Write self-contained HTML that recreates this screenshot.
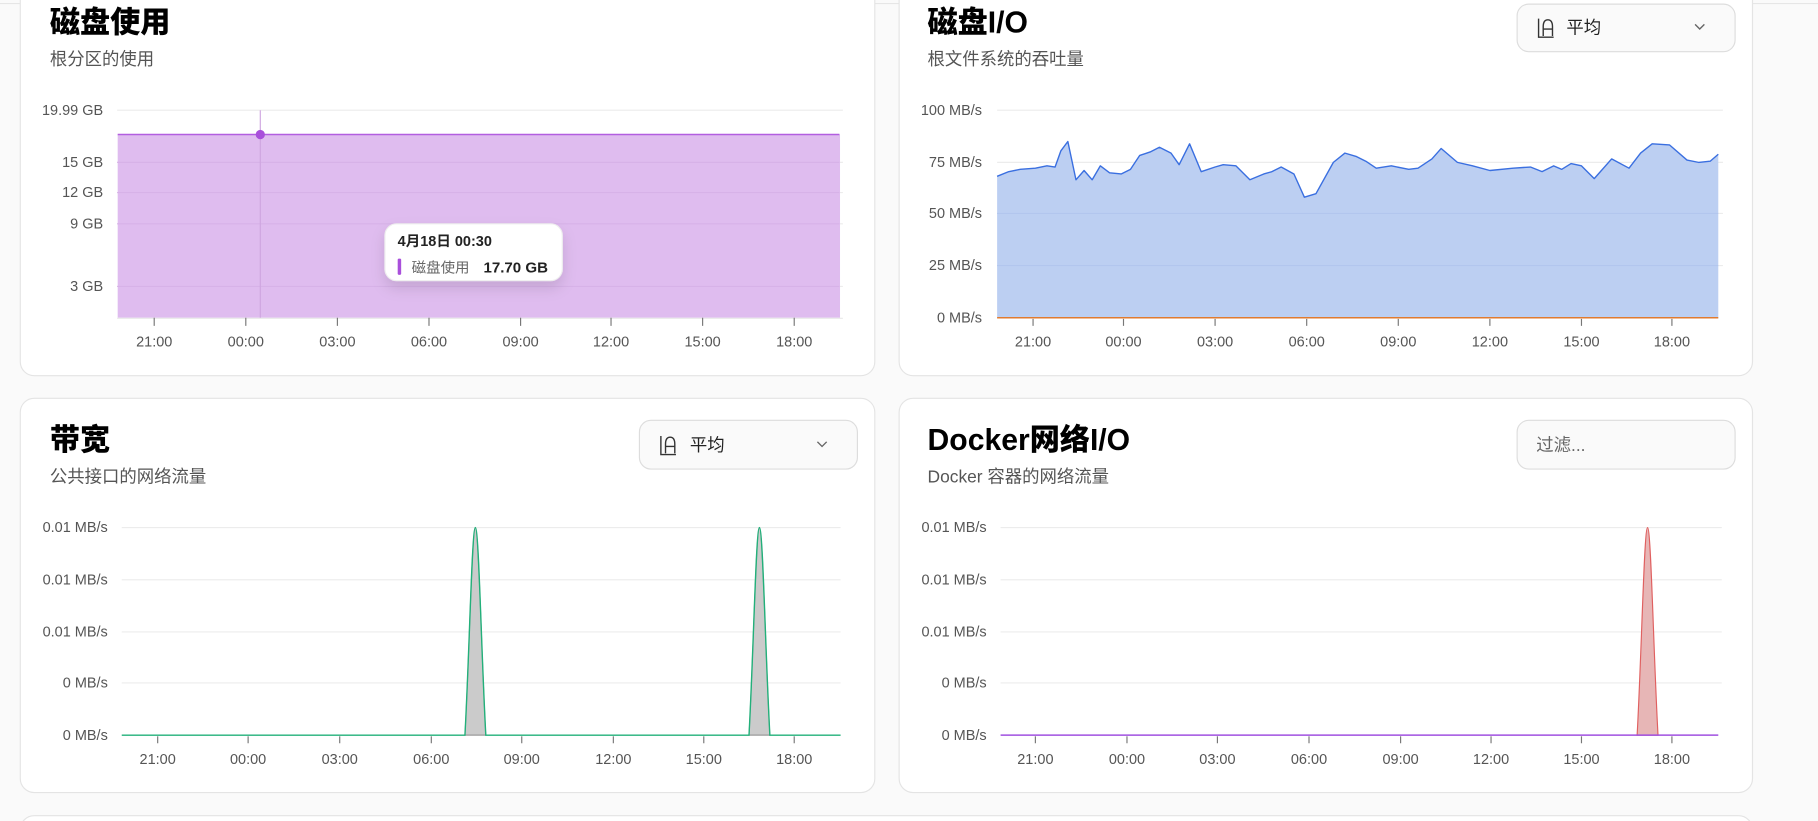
<!DOCTYPE html>
<html><head><meta charset="utf-8"><style>
html,body{margin:0;padding:0;background:#fafafa;width:1818px;height:821px;overflow:hidden}
svg{display:block}
text{font-family:"Liberation Sans","Noto Sans CJK SC",sans-serif}
.t{font-size:26px;font-weight:900;fill:#000}
.s{font-size:15px;fill:#555}
.y{font-size:12.5px;fill:#555;text-anchor:end}
.x{font-size:12.5px;fill:#555;text-anchor:middle}
.g{stroke:#ececec;stroke-width:1}
.tk{stroke:#777;stroke-width:1}
</style></head><body>
<svg width="1818" height="821" viewBox="0 0 1568 708" xmlns="http://www.w3.org/2000/svg">
<defs><filter id="sh" x="-30%" y="-30%" width="160%" height="180%"><feDropShadow dx="0" dy="6" stdDeviation="6" flood-color="#000" flood-opacity="0.12"/></filter></defs>
<rect width="1568" height="708" fill="#fafafa"/>
<line x1="0" y1="3" x2="1568" y2="3" stroke="#e6e6e6"/>
<rect x="17.5" y="-20" width="737" height="344" rx="12" fill="#fff" stroke="#e4e4e4"/>
<rect x="775.5" y="-20" width="736" height="344" rx="12" fill="#fff" stroke="#e4e4e4"/>
<rect x="17.5" y="343.5" width="737" height="340" rx="12" fill="#fff" stroke="#e4e4e4"/>
<rect x="775.5" y="343.5" width="736" height="340" rx="12" fill="#fff" stroke="#e4e4e4"/>
<rect x="17.5" y="703.5" width="1494" height="40" rx="12" fill="#fff" stroke="#e4e4e4"/>

<text x="43" y="28" class="t">磁盘使用</text>
<text x="43" y="56" class="s">根分区的使用</text>
<g class="g"><line x1="101" y1="95" x2="727" y2="95"/><line x1="101" y1="140" x2="727" y2="140"/><line x1="101" y1="166" x2="727" y2="166"/><line x1="101" y1="193" x2="727" y2="193"/><line x1="101" y1="247" x2="727" y2="247"/></g>
<rect x="101.5" y="116" width="623" height="158" fill="#dfbcef"/>
<g stroke="#d7b2e8"><line x1="101" y1="140" x2="724" y2="140"/><line x1="101" y1="166" x2="724" y2="166"/><line x1="101" y1="193" x2="724" y2="193"/><line x1="101" y1="247" x2="724" y2="247"/></g>
<line x1="101.5" y1="116" x2="724" y2="116" stroke="#b25ee0" stroke-width="1.3"/>
<line x1="101" y1="274.5" x2="727" y2="274.5" stroke="#e8e8e8"/>
<line x1="224.5" y1="95" x2="224.5" y2="274" stroke="#cfa6e0"/>
<circle cx="224.5" cy="116" r="4" fill="#a94fdb"/>
<text x="89" y="99" class="y">19.99 GB</text><text x="89" y="144" class="y">15 GB</text><text x="89" y="170" class="y">12 GB</text><text x="89" y="197" class="y">9 GB</text><text x="89" y="251" class="y">3 GB</text>
<g class="tk"><line x1="133" y1="274" x2="133" y2="281"/><line x1="212" y1="274" x2="212" y2="281"/><line x1="291" y1="274" x2="291" y2="281"/><line x1="370" y1="274" x2="370" y2="281"/><line x1="449" y1="274" x2="449" y2="281"/><line x1="527" y1="274" x2="527" y2="281"/><line x1="606" y1="274" x2="606" y2="281"/><line x1="685" y1="274" x2="685" y2="281"/></g>
<text x="133" y="299" class="x">21:00</text><text x="212" y="299" class="x">00:00</text><text x="291" y="299" class="x">03:00</text><text x="370" y="299" class="x">06:00</text><text x="449" y="299" class="x">09:00</text><text x="527" y="299" class="x">12:00</text><text x="606" y="299" class="x">15:00</text><text x="685" y="299" class="x">18:00</text>
<rect x="332" y="193" width="153" height="49" rx="10" fill="#fff" stroke="#eee" filter="url(#sh)"/>
<text x="343" y="212" style="font-size:12.5px;font-weight:700;fill:#222">4月18日 00:30</text>
<rect x="343" y="223" width="3" height="14" rx="1" fill="#a94fdb"/>
<text x="355" y="235" style="font-size:12.5px;fill:#666">磁盘使用</text>
<text x="417" y="235" style="font-size:13px;font-weight:700;fill:#222">17.70 GB</text>

<text x="800" y="28" class="t">磁盘I/O</text>
<text x="800" y="56" class="s">根文件系统的吞吐量</text>
<rect x="1308.5" y="3.5" width="188" height="41" rx="10" fill="#fafafa" stroke="#ddd"/>
<path d="M1327 16v16h13M1331 31v-8q0-6 4-6q4 0 4 6v8M1331 25h8" fill="none" stroke="#333" stroke-width="1.2"/>
<text x="1351" y="29" style="font-size:15px;fill:#222">平均</text>
<path d="M1462 21l4 4 4-4" fill="none" stroke="#666" stroke-width="1.2"/>
<g class="g"><line x1="860" y1="95" x2="1486" y2="95"/><line x1="860" y1="140" x2="1486" y2="140"/><line x1="860" y1="184" x2="1486" y2="184"/><line x1="860" y1="229" x2="1486" y2="229"/></g>
<path d="M860,274 L860,152 L870,148 L880,146 L893,145 L903,143 L910,144 L915,130 L921,122 L928,155 L935,147 L942,155 L949,143 L957,149 L967,150 L975,146 L983,134 L992,131 L1000,127 L1010,132 L1017,142 L1026,124 L1036,148 L1048,144 L1055,142 L1066,143 L1078,155 L1090,150 L1097,148 L1105,144 L1116,150 L1125,170 L1135,167 L1150,140 L1160,132 L1170,135 L1178,139 L1187,145 L1200,143 L1215,146 L1223,145 L1235,137 L1243,128 L1257,140 L1270,143 L1285,147 L1305,145 L1320,144 L1330,148 L1340,143 L1347,146 L1355,141 L1364,143 L1375,154 L1390,137 L1405,145 L1415,132 L1425,124 L1440,125 L1455,138 L1465,140 L1475,139 L1482,133 L1482,274 Z" fill="#bccff2"/>
<g stroke="#b2c6ee"><line x1="860" y1="184" x2="1482" y2="184"/><line x1="860" y1="229" x2="1482" y2="229"/></g>
<path d="M860,152 L870,148 L880,146 L893,145 L903,143 L910,144 L915,130 L921,122 L928,155 L935,147 L942,155 L949,143 L957,149 L967,150 L975,146 L983,134 L992,131 L1000,127 L1010,132 L1017,142 L1026,124 L1036,148 L1048,144 L1055,142 L1066,143 L1078,155 L1090,150 L1097,148 L1105,144 L1116,150 L1125,170 L1135,167 L1150,140 L1160,132 L1170,135 L1178,139 L1187,145 L1200,143 L1215,146 L1223,145 L1235,137 L1243,128 L1257,140 L1270,143 L1285,147 L1305,145 L1320,144 L1330,148 L1340,143 L1347,146 L1355,141 L1364,143 L1375,154 L1390,137 L1405,145 L1415,132 L1425,124 L1440,125 L1455,138 L1465,140 L1475,139 L1482,133" fill="none" stroke="#3a6fe0" stroke-width="1.2" stroke-linejoin="round"/>
<line x1="860" y1="274" x2="1482" y2="274" stroke="#e07b30" stroke-width="1.3"/>
<text x="847" y="99" class="y">100 MB/s</text><text x="847" y="144" class="y">75 MB/s</text><text x="847" y="188" class="y">50 MB/s</text><text x="847" y="233" class="y">25 MB/s</text><text x="847" y="278" class="y">0 MB/s</text>
<g class="tk"><line x1="891" y1="275" x2="891" y2="281"/><line x1="969" y1="275" x2="969" y2="281"/><line x1="1048" y1="275" x2="1048" y2="281"/><line x1="1127" y1="275" x2="1127" y2="281"/><line x1="1206" y1="275" x2="1206" y2="281"/><line x1="1285" y1="275" x2="1285" y2="281"/><line x1="1364" y1="275" x2="1364" y2="281"/><line x1="1442" y1="275" x2="1442" y2="281"/></g>
<text x="891" y="299" class="x">21:00</text><text x="969" y="299" class="x">00:00</text><text x="1048" y="299" class="x">03:00</text><text x="1127" y="299" class="x">06:00</text><text x="1206" y="299" class="x">09:00</text><text x="1285" y="299" class="x">12:00</text><text x="1364" y="299" class="x">15:00</text><text x="1442" y="299" class="x">18:00</text>

<text x="43" y="388" class="t">带宽</text>
<text x="43" y="416" class="s">公共接口的网络流量</text>
<rect x="551.5" y="362.5" width="188" height="42" rx="10" fill="#fafafa" stroke="#ddd"/>
<path d="M570 376v16h13M574 391v-8q0-6 4-6q4 0 4 6v8M574 385h8" fill="none" stroke="#333" stroke-width="1.2"/>
<text x="595" y="389" style="font-size:15px;fill:#222">平均</text>
<path d="M705 381l4 4 4-4" fill="none" stroke="#666" stroke-width="1.2"/>
<g class="g"><line x1="105" y1="455" x2="725" y2="455"/><line x1="105" y1="500" x2="725" y2="500"/><line x1="105" y1="545" x2="725" y2="545"/><line x1="105" y1="589" x2="725" y2="589"/></g>
<path d="M401,634 C405,560 407,455 410,455 C413,455 415,560 419,634 Z M646,634 C650,560 652,455 655,455 C658,455 660,560 664,634 Z" fill="#cbcbcb" stroke="#888" stroke-width="0.8"/>
<path d="M105,634 L401,634 C405,560 407,455 410,455 C413,455 415,560 419,634 L646,634 C650,560 652,455 655,455 C658,455 660,560 664,634 L725,634" fill="none" stroke="#22b07a" stroke-width="1.2"/>
<text x="93" y="459" class="y">0.01 MB/s</text><text x="93" y="504" class="y">0.01 MB/s</text><text x="93" y="549" class="y">0.01 MB/s</text><text x="93" y="593" class="y">0 MB/s</text><text x="93" y="638" class="y">0 MB/s</text>
<g class="tk"><line x1="136" y1="635" x2="136" y2="641"/><line x1="214" y1="635" x2="214" y2="641"/><line x1="293" y1="635" x2="293" y2="641"/><line x1="372" y1="635" x2="372" y2="641"/><line x1="450" y1="635" x2="450" y2="641"/><line x1="529" y1="635" x2="529" y2="641"/><line x1="607" y1="635" x2="607" y2="641"/><line x1="685" y1="635" x2="685" y2="641"/></g>
<text x="136" y="659" class="x">21:00</text><text x="214" y="659" class="x">00:00</text><text x="293" y="659" class="x">03:00</text><text x="372" y="659" class="x">06:00</text><text x="450" y="659" class="x">09:00</text><text x="529" y="659" class="x">12:00</text><text x="607" y="659" class="x">15:00</text><text x="685" y="659" class="x">18:00</text>

<text x="800" y="388" class="t">Docker网络I/O</text>
<text x="800" y="416" class="s">Docker 容器的网络流量</text>
<rect x="1308.5" y="362.5" width="188" height="42" rx="10" fill="#fafafa" stroke="#ddd"/>
<text x="1325" y="389" style="font-size:15px;fill:#666">过滤...</text>
<g class="g"><line x1="863" y1="455" x2="1485" y2="455"/><line x1="863" y1="500" x2="1485" y2="500"/><line x1="863" y1="545" x2="1485" y2="545"/><line x1="863" y1="589" x2="1485" y2="589"/></g>
<path d="M1412,634 C1416,560 1418,455 1421,455 C1424,455 1426,560 1430,634 Z" fill="#e7b6b6" stroke="#e06060" stroke-width="1"/>
<line x1="863" y1="634" x2="1482" y2="634" stroke="#a050e0" stroke-width="1.3"/>
<text x="851" y="459" class="y">0.01 MB/s</text><text x="851" y="504" class="y">0.01 MB/s</text><text x="851" y="549" class="y">0.01 MB/s</text><text x="851" y="593" class="y">0 MB/s</text><text x="851" y="638" class="y">0 MB/s</text>
<g class="tk"><line x1="893" y1="635" x2="893" y2="641"/><line x1="972" y1="635" x2="972" y2="641"/><line x1="1050" y1="635" x2="1050" y2="641"/><line x1="1129" y1="635" x2="1129" y2="641"/><line x1="1208" y1="635" x2="1208" y2="641"/><line x1="1286" y1="635" x2="1286" y2="641"/><line x1="1364" y1="635" x2="1364" y2="641"/><line x1="1442" y1="635" x2="1442" y2="641"/></g>
<text x="893" y="659" class="x">21:00</text><text x="972" y="659" class="x">00:00</text><text x="1050" y="659" class="x">03:00</text><text x="1129" y="659" class="x">06:00</text><text x="1208" y="659" class="x">09:00</text><text x="1286" y="659" class="x">12:00</text><text x="1364" y="659" class="x">15:00</text><text x="1442" y="659" class="x">18:00</text>
</svg>
</body></html>
